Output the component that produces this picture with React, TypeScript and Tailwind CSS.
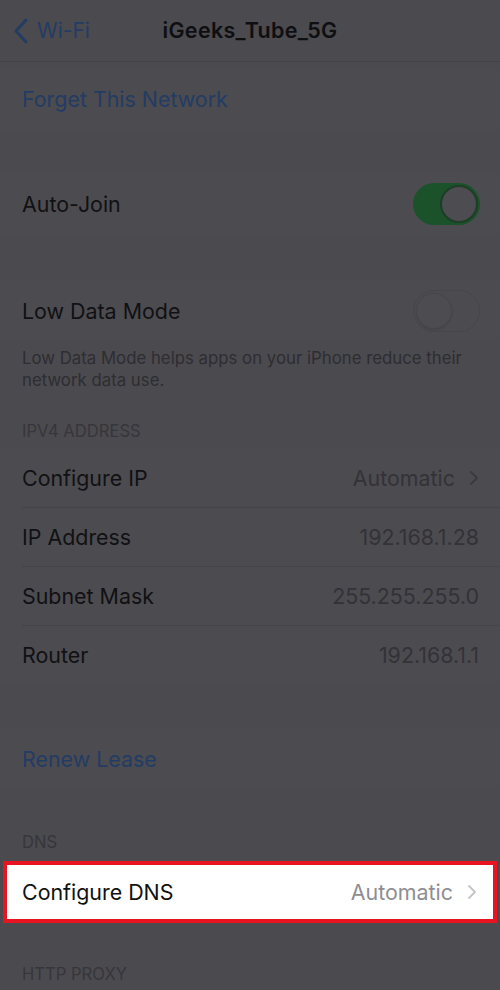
const font = { fontFamily: 'Inter, "Noto Sans", sans-serif' };

function Chevron({ className }: { className: string }) {
  return (
    <svg width="10" height="16" viewBox="0 0 10 16" className={className}>
      <path d="M2 2l6 6-6 6" fill="none" stroke="currentColor" strokeWidth="1.8" strokeLinecap="round" strokeLinejoin="round" />
    </svg>
  );
}

function Row({ label, value, chevron }: { label: string; value?: string; chevron?: boolean }) {
  return (
    <div className="flex h-[58px] items-center justify-between pl-[22px] pr-[21px]">
      <span className="text-[21.4px] text-[#111113]">{label}</span>
      <span className="flex items-center gap-[14px] text-[21.4px] text-[#333237]">
        {value}
        {chevron && <Chevron className="text-[#3a393e]" />}
      </span>
    </div>
  );
}

function Toggle({ on }: { on: boolean }) {
  return on ? (
    <div className="flex h-[42px] w-[67px] items-center justify-end rounded-full bg-[#1b5229] p-[2px]">
      <div className="h-[38px] w-[38px] rounded-full border-2 border-[#1d3d26] bg-[#4d4c51]" />
    </div>
  ) : (
    <div className="flex h-[42px] w-[67px] items-center rounded-full border border-[#47464b] bg-[#4c4b50] p-[2px]">
      <div className="h-[36px] w-[36px] rounded-full border border-[#47464b] bg-[#4d4c51] shadow-[0_1px_2px_rgba(0,0,0,0.12)]" />
    </div>
  );
}

function Divider() {
  return <div className="ml-[22px] h-px bg-[#444348]" />;
}

export default function App() {
  return (
    <div className="h-[990px] w-[500px] overflow-hidden bg-[#4b4a4f]" style={font}>
      {/* nav */}
      <div className="relative flex h-[62px] items-center border-b border-[#434247]">
        <div className="flex items-center gap-[8px] pl-[13px] text-[#233c63]">
          <svg width="16" height="26" viewBox="0 0 16 26">
            <path d="M13 2L3 13l10 11" fill="none" stroke="currentColor" strokeWidth="3" strokeLinecap="round" strokeLinejoin="round" />
          </svg>
          <span className="text-[21px]">Wi-Fi</span>
        </div>
        <span className="absolute left-0 right-0 text-center text-[21.5px] font-semibold tracking-[0.3px] text-[#0f0f11]">
          iGeeks_Tube_5G
        </span>
      </div>

      <div className="mt-[6px] flex h-[62px] items-center bg-[#4c4b50] pl-[22px]">
        <span className="text-[21.4px] text-[#233c63]">Forget This Network</span>
      </div>

      <div className="h-[42px]" />

      <div className="flex h-[64px] items-center justify-between bg-[#4c4b50] pl-[22px] pr-[20px]">
        <span className="text-[21.4px] text-[#111113]">Auto-Join</span>
        <Toggle on />
      </div>

      <div className="h-[45px]" />

      <div className="flex h-[60px] items-center justify-between bg-[#4c4b50] pl-[22px] pr-[20px]">
        <span className="text-[21.4px] text-[#111113]">Low Data Mode</span>
        <Toggle on={false} />
      </div>

      <p className="px-[22px] pt-[6px] text-[16.8px] leading-[22px] text-[#2e2d31]">
        Low Data Mode helps apps on your iPhone reduce their network data use.
      </p>

      <div className="px-[22px] pt-[28px] pb-[6px] text-[16.6px] leading-[24px] text-[#37363a]">IPV4 ADDRESS</div>

      <div className="bg-[#4c4b50]">
        <Row label="Configure IP" value="Automatic" chevron />
        <Divider />
        <Row label="IP Address" value="192.168.1.28" />
        <Divider />
        <Row label="Subnet Mask" value="255.255.255.0" />
        <Divider />
        <Row label="Router" value="192.168.1.1" />
      </div>

      <div className="h-[45px]" />

      <div className="flex h-[60px] items-center bg-[#4c4b50] pl-[22px]">
        <span className="text-[21.4px] text-[#233c63]">Renew Lease</span>
      </div>

      <div className="px-[22px] pt-[41px] pb-[7px] text-[16.6px] leading-[24px] text-[#37363a]">DNS</div>

      <div className="mx-[3px] border-[4px] border-[#e8141f] bg-white">
        <div className="flex h-[54px] items-center justify-between pl-[15px] pr-[16px]">
          <span className="text-[21.4px] text-[#111]">Configure DNS</span>
          <span className="flex items-center gap-[14px] text-[21.4px] text-[#8e8e93]">
            Automatic
            <Chevron className="text-[#c4c4c7]" />
          </span>
        </div>
      </div>

      <div className="px-[22px] pt-[39px] text-[16.6px] leading-[24px] text-[#37363a]">HTTP PROXY</div>
    </div>
  );
}
